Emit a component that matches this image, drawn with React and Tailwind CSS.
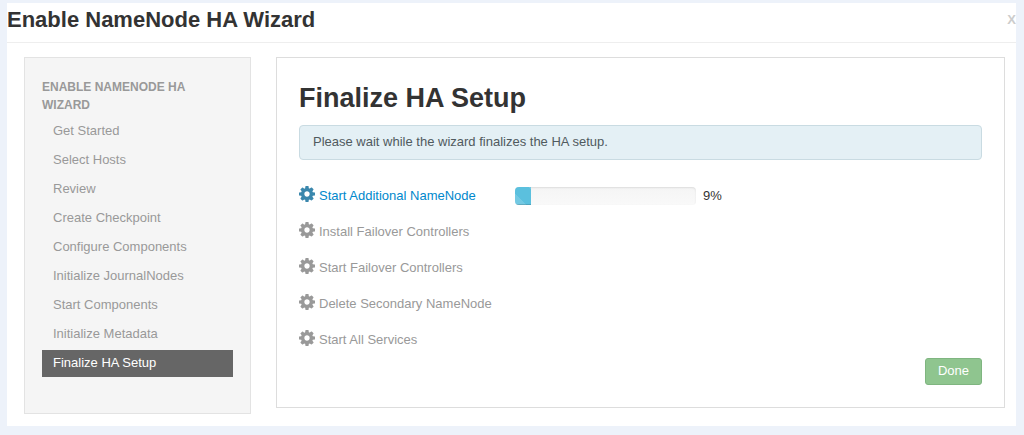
const steps = [
  'Get Started',
  'Select Hosts',
  'Review',
  'Create Checkpoint',
  'Configure Components',
  'Initialize JournalNodes',
  'Start Components',
  'Initialize Metadata',
  'Finalize HA Setup',
];

const tasks = [
  { name: 'Start Additional NameNode', progress: 9 },
  { name: 'Install Failover Controllers' },
  { name: 'Start Failover Controllers' },
  { name: 'Delete Secondary NameNode' },
  { name: 'Start All Services' },
];

function CogIcon({ className }) {
  return (
    <svg viewBox="128 128 1536 1536" fill="currentColor" aria-hidden="true" className={className}>
      <path d="M1152 896q0-106-75-181t-181-75-181 75-75 181 75 181 181 75 181-75 75-181zm512-109v222q0 12-8 23t-20 13l-185 28q-19 54-39 91 35 50 107 138 10 12 10 25t-9 23q-27 37-99 108t-94 71q-12 0-26-9l-138-108q-44 23-91 38-16 136-29 186-7 28-36 28h-222q-14 0-24.5-8.5t-11.5-21.5l-28-184q-49-16-90-37l-141 107q-10 9-25 9-14 0-25-11-126-114-165-168-7-10-7-23 0-12 8-23 15-21 51-66.5t54-70.5q-27-50-41-99l-183-27q-13-2-21-12.5t-8-23.5v-222q0-12 8-23t19-13l186-28q14-46 39-92-40-57-107-138-10-12-10-24 0-10 9-23 26-36 98.5-107.5t94.5-71.5q13 0 26 10l138 107q44-23 91-38 16-136 29-186 7-28 36-28h222q14 0 24.5 8.5t11.5 21.5l28 184q49 16 90 37l142-107q9-9 24-9 13 0 25 10 129 119 165 170 7 8 7 22 0 12-8 23-15 21-51 66.5t-54 70.5q26 50 41 98l183 28q13 2 21 12.5t8 23.5z" />
    </svg>
  );
}

function ProgressBar({ value, label }) {
  return (
    <div className="flex items-end gap-[7px]">
      <div
        role="progressbar"
        aria-label={label}
        aria-valuenow={value}
        aria-valuemin={0}
        aria-valuemax={100}
        className="h-[18px] w-[181px] overflow-hidden rounded bg-linear-to-b from-[#f5f5f5] to-[#f9f9f9] shadow-[inset_0_1px_2px_rgba(0,0,0,0.1)]"
      >
        <div
          className="h-full bg-[#5bc0de] bg-[linear-gradient(45deg,rgba(255,255,255,0.15)_25%,transparent_25%,transparent_50%,rgba(255,255,255,0.15)_50%,rgba(255,255,255,0.15)_75%,transparent_75%)] bg-[length:40px_40px] bg-[position:-8px_100%] shadow-[inset_0_-1px_0_rgba(0,0,0,0.15)]"
          style={{ width: `${value}%` }}
        />
      </div>
      <span className="text-[#333333]">{value}%</span>
    </div>
  );
}

function StepNav() {
  return (
    <nav className="w-[227px] shrink-0 border border-[#e3e3e3] bg-[#f5f5f5] px-[17px] pt-5 pb-9">
      <h2 className="mb-1 text-xs leading-[18px] font-bold text-[#999999] uppercase">Enable NameNode HA Wizard</h2>
      <ul className="flex flex-col gap-0.5">
        {steps.map((step, index) => {
          const active = index === steps.length - 1;
          return (
            <li key={step}>
              <a
                href="#"
                aria-current={active ? 'step' : undefined}
                className={`block px-[11px] pt-1 pb-[5px] ${active ? 'bg-[#666666] text-white' : 'text-[#999999]'}`}
              >
                {step}
              </a>
            </li>
          );
        })}
      </ul>
    </nav>
  );
}

export default function App() {
  return (
    <div className="min-h-screen bg-[#edf2fa] pt-[3px] pr-2 pb-[9px] pl-[7px] font-['Liberation_Sans',Arial,sans-serif] text-[13px] leading-[18px]">
      <div className="bg-white">
        <header className="flex items-center justify-between border-b border-[#eeeeee] pt-[3px] pb-2">
          <h1 className="text-[22px] leading-7 font-bold text-[#333333]">Enable NameNode HA Wizard</h1>
          <button type="button" aria-label="Close" className="text-[13px] leading-[18px] font-bold text-[#cccccc]">
            X
          </button>
        </header>

        <div className="flex items-start gap-[25px] pt-[14px] pr-[11px] pb-3 pl-[17px]">
          <StepNav />

          <main className="min-w-0 flex-1 border border-[#dddddd] px-[22px] pt-5 pb-[22px]">
            <h2 className="text-[27px] leading-10 font-bold text-[#333333]">Finalize HA Setup</h2>
            <p className="mt-[7px] rounded border border-[#c9dbe2] bg-[#e4f0f5] px-[13px] pt-[7px] pb-2 text-[#505a5e]">
              Please wait while the wizard finalizes the HA setup.
            </p>

            <ul className="mt-[26px] flex flex-col gap-[17px]">
              {tasks.map((task) => {
                const running = task.progress !== undefined;
                return (
                  <li key={task.name} className="flex h-[19px]">
                    <div className="flex w-[216px] gap-1">
                      <CogIcon className={`size-4 shrink-0 ${running ? 'text-[#3a87ad]' : 'text-[#999999]'}`} />
                      {running ? (
                        <a href="#" className="self-end text-[#0088cc]">
                          {task.name}
                        </a>
                      ) : (
                        <span className="self-end text-[#999999]">{task.name}</span>
                      )}
                    </div>
                    {running && <ProgressBar value={task.progress} label={task.name} />}
                  </li>
                );
              })}
            </ul>

            <div className="mt-[9px] flex justify-end">
              <button
                type="button"
                className="rounded-[3px] border border-[#7fb580] bg-[#8fc58f] px-3 pt-[3px] pb-1 text-white"
              >
                Done
              </button>
            </div>
          </main>
        </div>
      </div>
    </div>
  );
}
